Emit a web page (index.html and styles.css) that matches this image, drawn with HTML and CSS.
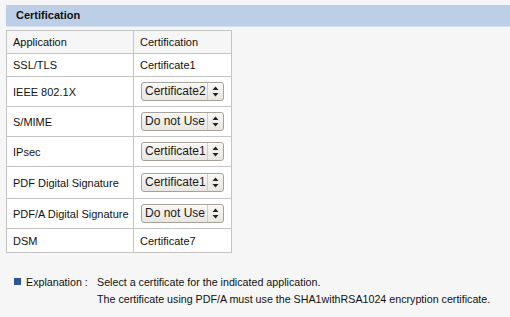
FILE: index.html
```html
<!DOCTYPE html>
<html lang="en">
<head>
  <meta charset="UTF-8" />
  <title>Certification</title>
  <link rel="stylesheet" href="styles.css">
</head>
<body>
  <div class="section-bar">Certification</div>

  <table class="cert-table">
    <tr class="head-row">
      <th>Application</th>
      <th>Certification</th>
    </tr>
    <tr class="text-row">
      <td>SSL/TLS</td>
      <td>Certificate1</td>
    </tr>
    <tr class="select-row">
      <td>IEEE 802.1X</td>
      <td><div class="select"><span class="select-value">Certificate2</span><span class="select-arrow"><svg width="7" height="11" viewBox="0 0 7 11"><path d="M3.5 0.5 L6.5 4 L0.5 4 Z M3.5 10.5 L6.5 7 L0.5 7 Z" fill="#222"/></svg></span></div></td>
    </tr>
    <tr class="select-row">
      <td>S/MIME</td>
      <td><div class="select"><span class="select-value">Do not Use</span><span class="select-arrow"><svg width="7" height="11" viewBox="0 0 7 11"><path d="M3.5 0.5 L6.5 4 L0.5 4 Z M3.5 10.5 L6.5 7 L0.5 7 Z" fill="#222"/></svg></span></div></td>
    </tr>
    <tr class="select-row">
      <td>IPsec</td>
      <td><div class="select"><span class="select-value">Certificate1</span><span class="select-arrow"><svg width="7" height="11" viewBox="0 0 7 11"><path d="M3.5 0.5 L6.5 4 L0.5 4 Z M3.5 10.5 L6.5 7 L0.5 7 Z" fill="#222"/></svg></span></div></td>
    </tr>
    <tr class="select-row tall">
      <td>PDF Digital Signature</td>
      <td><div class="select"><span class="select-value">Certificate1</span><span class="select-arrow"><svg width="7" height="11" viewBox="0 0 7 11"><path d="M3.5 0.5 L6.5 4 L0.5 4 Z M3.5 10.5 L6.5 7 L0.5 7 Z" fill="#222"/></svg></span></div></td>
    </tr>
    <tr class="select-row">
      <td>PDF/A Digital Signature</td>
      <td><div class="select"><span class="select-value">Do not Use</span><span class="select-arrow"><svg width="7" height="11" viewBox="0 0 7 11"><path d="M3.5 0.5 L6.5 4 L0.5 4 Z M3.5 10.5 L6.5 7 L0.5 7 Z" fill="#222"/></svg></span></div></td>
    </tr>
    <tr class="text-row last">
      <td>DSM</td>
      <td>Certificate7</td>
    </tr>
  </table>

  <div class="explanation">
    <span class="bullet"></span>
    <span class="explanation-label">Explanation :</span>
    <div class="explanation-text">
      <p>Select a certificate for the indicated application.</p>
      <p>The certificate using PDF/A must use the SHA1withRSA1024 encryption certificate.</p>
    </div>
  </div>
</body>
</html>
```

FILE: styles.css
```css
body {
  background-color: #f6f6f6;
  color: #111;
  font-family: 'Liberation Sans', Arial, sans-serif;
  font-size: 11px;
  margin: 0;
  padding: 5px 0 0 6px;
}

.section-bar {
  background-color: #bccfe6;
  border-bottom: 1px solid #d6e2f1;
  font-weight: bold;
  height: 21px;
  line-height: 21px;
  padding-left: 10px;
}

.cert-table {
  margin-top: 3px;
  border-collapse: collapse;
  width: 226px;
  border: 1px solid #b4b4b4;
}

.cert-table th,
.cert-table td {
  border: 1px solid #c4c4c4;
  text-align: left;
  font-weight: normal;
  padding: 0 0 0 6px;
  white-space: nowrap;
}

.cert-table th:first-child,
.cert-table td:first-child {
  width: 120px;
}

.head-row {
  background-color: #f6f6f6;
  height: 23px;
}

.text-row {
  background-color: #fff;
  height: 23px;
}

.text-row.last {
  height: 24px;
}

.select-row {
  background-color: #fff;
  height: 30px;
}

.select-row.tall {
  height: 32px;
}

.select {
  display: flex;
  align-items: stretch;
  width: 81px;
  height: 17px;
  margin-left: 1px;
  border: 1px solid #a6a29a;
  border-radius: 3px;
  background: linear-gradient(to bottom, #f8f7f5, #e8e6e1);
  box-shadow: 0 1px 0 #fff inset;
  font-size: 12px;
  color: #1a1a1a;
}

.select-value {
  flex: 1;
  line-height: 17px;
  padding-left: 3px;
  overflow: hidden;
}

.select-arrow {
  display: flex;
  align-items: center;
  justify-content: center;
  width: 15px;
  border-left: 1px solid #d0cdc6;
}

.explanation {
  display: flex;
  margin-top: 21px;
  padding-left: 8px;
  line-height: 17px;
  font-size: 10.7px;
}

.bullet {
  width: 7px;
  height: 7px;
  background-color: #2e5597;
  margin: 4px 5px 0 0;
}

.explanation-label {
  width: 71px;
}

.explanation-text p {
  margin: 0;
}
```
